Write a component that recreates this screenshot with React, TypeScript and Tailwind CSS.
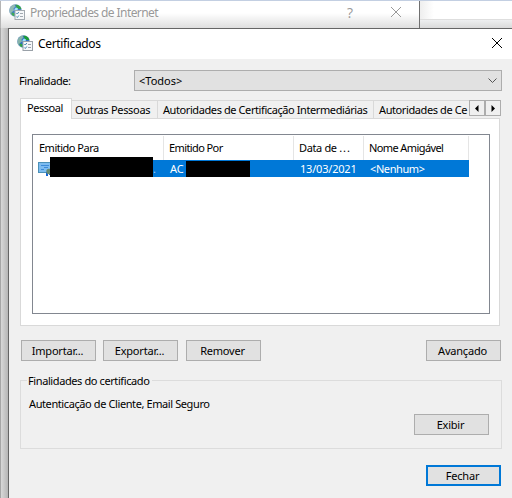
import type { ReactNode } from 'react';

function GlobeIcon() {
  return (
    <svg width="17" height="17" viewBox="0 0 17 17" className="block shrink-0">
      <circle cx="6.500" cy="6.500" r="6" fill="#2d6fc4" stroke="#86a9bd" strokeWidth="0.7" />
      <path d="M.8 5C1.500 2.500 3.500 .9 5.500 .8L6.500 2.500 4.500 4.500 5 6.500 3 8 2 10.500C.7 9 .4 7 .8 5Z" fill="#86b3ab" />
      <path d="M6.500 .8C9.500 .5 11.800 2.500 12.300 5H9.500L7.500 3.500Z" fill="#1c9b35" />
      <path d="M7 3.500 9 4.500 8.500 6.500H5.500V5Z" fill="#9be4f8" />
      <path d="M2.500 8.500 5.500 9V12.300L3 11.300Z" fill="#2da344" />
      <rect x="6" y="6.500" width="9.500" height="9" fill="#f5f7f9" stroke="#9aa1a8" />
      <path d="M7.300 9 8.300 10 9.800 8M7.300 12.500 8.300 13.500 9.800 11.500" fill="none" stroke="#3f83ae" />
      <path d="M11 9.500H14M11 12.500H14" stroke="#9aa2aa" />
    </svg>
  );
}

function CertificateIcon() {
  return (
    <svg width="13" height="15" viewBox="0 0 13 15" className="block shrink-0">
      <rect x="0.500" y="0.500" width="14" height="10" fill="#7dbcf0" stroke="#4b91b8" />
      <path d="M3 3.500H11M6 5.500H10M3 7.500H6" stroke="#3d8bd9" />
      <path d="M8 10H10V14H8ZM11 10H13V13H11Z" fill="#1264d4" />
      <circle cx="11" cy="9.500" r="2.700" fill="#668971" />
    </svg>
  );
}

function CloseIcon() {
  return (
    <svg width="10" height="10" viewBox="0 0 10 10" className="block shrink-0" fill="none" stroke="currentColor">
      <path d="M0 0 10 10M10 0 0 10" />
    </svg>
  );
}

function Button({ children, primary = false }: { children: ReactNode; primary?: boolean }) {
  return (
    <button
      className={`flex h-[21px] w-[75px] shrink-0 items-center justify-center bg-[#e1e1e1] pr-0.5 leading-[15px] tracking-[-0.2px] ${
        primary ? 'border-2 border-[#0078d7]' : 'border border-[#adadad]'
      }`}
    >
      {children}
    </button>
  );
}

function BackWindow() {
  return (
    <div className="flex h-7 border-t border-[#c3cfe2]">
      <div className="w-px bg-[#b5b5b5]" />
      <div className="flex w-[418px] items-start bg-linear-to-b from-white from-45% to-[#dedede] pt-[3px] pl-2 text-[#999999]">
        <div className="opacity-90"><GlobeIcon /></div>
        <span className="ml-1 w-[317px] shrink-0 text-[12px] leading-[17px] tracking-[-0.58px]">Propriedades de Internet</span>
        <span className="w-[44px] shrink-0 font-['Open_Sans',sans-serif] text-[14px] leading-[17px]">?</span>
        <div className="pt-[3px]"><CloseIcon /></div>
      </div>
      <div className="w-px bg-[#707070]" />
      <div className="flex grow flex-col">
        <div className="h-[19px] border-b border-[#dedede] bg-linear-to-r from-[#eeeeee] to-white to-15%" />
        <div className="grow bg-linear-to-b from-[#eeeff0] to-[#dadada]" />
      </div>
    </div>
  );
}

function TabStrip() {
  return (
    <div className="flex h-5 items-end">
      <div className="z-10 h-[21px] -mb-px w-[52px] shrink-0 border border-b-0 border-[#d9d9d9] bg-white pl-1.5 leading-[17px] tracking-[-0.45px]">Pessoal</div>
      <div className="flex h-[18px] w-[397px] border-t border-[#d9d9d9] whitespace-nowrap leading-[18px]">
        <div className="w-[86px] shrink-0 border-r border-[#d9d9d9] pl-[3px] tracking-[-0.3px]">Outras Pessoas</div>
        <div className="w-[216px] shrink-0 border-r border-[#d9d9d9] pl-[5px] tracking-[-0.41px]">Autoridades de Certificação Intermediárias</div>
        <div className="shrink-0 pl-[5px] tracking-[-0.4px]">Autoridades de Ce</div>
      </div>
      <div className="mb-[2px] flex h-4">
        <div className="flex w-4 items-center justify-center border border-[#adadad] bg-[#f0f0f0]">
          <svg width="4" height="7" viewBox="0 0 4 7"><path d="M3.500 0V7L0 3.500Z" /></svg>
        </div>
        <div className="flex w-4 items-center justify-center border border-[#adadad] bg-[#f0f0f0]">
          <svg width="4" height="7" viewBox="0 0 4 7"><path d="M.5 0V7L4 3.500Z" /></svg>
        </div>
      </div>
    </div>
  );
}

function CertificateList() {
  return (
    <div className="h-[180px] w-[458px] border border-[#828790] bg-white leading-[17px] whitespace-nowrap">
      <div className="flex h-[25px] pt-px">
        <div className="w-[131px] border-r border-[#e5e5e5] pt-[3px] pl-1.5 tracking-[-0.5px]">Emitido Para</div>
        <div className="w-[130px] border-r border-[#e5e5e5] pt-[3px] pl-[5px] tracking-[-0.6px]">Emitido Por</div>
        <div className="w-[70px] border-r border-[#e5e5e5] pt-[3px] pl-[5px] tracking-[-0.35px]">Data de <span className="tracking-[0.9px]">...</span></div>
        <div className="w-[105px] border-r border-[#e5e5e5] pt-[3px] pl-[5px] tracking-[-0.6px]">Nome Amigável</div>
      </div>
      <div className="flex h-[17px] pl-[5px] text-white">
        <div className="-mr-px pt-[2px]"><CertificateIcon /></div>
        <div className="flex w-[419px] bg-[#0078d7]">
          <div className="z-10 -mt-[3px] h-5 w-[103px] bg-black" />
          <div className="w-[17px] text-[#a6c8ed]">.</div>
          <div className="w-4">AC</div>
          <div className="mt-px h-4 w-16 bg-black" />
          <div className="w-[120px] pl-[50px] tracking-[-0.2px]">13/03/2021</div>
          <div className="tracking-[-0.4px]">&lt;Nenhum&gt;</div>
        </div>
      </div>
    </div>
  );
}

export default function App() {
  return (
    <div className="h-[498px] w-[512px] overflow-hidden bg-white font-['Noto_Sans',sans-serif] text-[11px] text-black">
      <BackWindow />
      <div className="flex h-[470px]">
        <div className="w-px bg-[#a6a6a6]" />
        <div className="w-[7px] bg-linear-to-r from-[#d8d8d8] to-[#b6b6b6]" />
        <main className="w-[504px] border-t border-l border-[#656565] bg-[#f0f0f0]">
          <header className="flex h-[30px] items-start bg-white pt-[6px] pl-2">
            <GlobeIcon />
            <h1 className="ml-1 w-[454px] text-[12px] leading-[17px] tracking-[-0.35px]">Certificados</h1>
            <div className="pt-[3px]"><CloseIcon /></div>
          </header>
          <div className="pl-[11px]">
            <div className="flex items-center pt-[11px]">
              <span className="-ml-px w-[115px] leading-[17px] tracking-[-0.4px]">Finalidade:</span>
              <div className="flex h-[21px] w-[368px] items-center justify-between border border-[#adadad] bg-[#e1e1e1] pr-1 pl-1">
                <span className="leading-[17px]">&lt;Todos&gt;</span>
                <svg width="9" height="6" viewBox="0 0 9 6" fill="none" stroke="#555"><path d="M.5.5 4.500 4.500 8.500.5" /></svg>
              </div>
            </div>
            <div className="mt-[7px]"><TabStrip /></div>
            <div className="h-[208px] w-[480px] border border-[#d9d9d9] bg-white pt-[15px] pl-[11px]">
              <CertificateList />
            </div>
            <div className="mt-[14px] flex pl-px">
              <Button>Importar...</Button>
              <div className="ml-[7px]"><Button>Exportar...</Button></div>
              <div className="ml-2"><Button>Remover</Button></div>
              <div className="ml-[165px]"><Button>Avançado</Button></div>
            </div>
            <section className="mt-[19px] h-[69px] w-[482px] border border-[#dcdcdc] pl-[6px]">
              <h2 className="-mt-[9px] w-[125px] bg-[#f0f0f0] pl-px leading-[17px] tracking-[-0.4px] whitespace-nowrap">Finalidades do certificado</h2>
              <p className="mt-[6px] pl-[2px] leading-[17px] tracking-[-0.4px]">Autenticação de Cliente, Email Seguro</p>
              <div className="mt-[2px] pl-[387px]"><Button>Exibir</Button></div>
            </section>
            <div className="mt-4 pl-[406px]"><Button primary>Fechar</Button></div>
          </div>
        </main>
      </div>
    </div>
  );
}
